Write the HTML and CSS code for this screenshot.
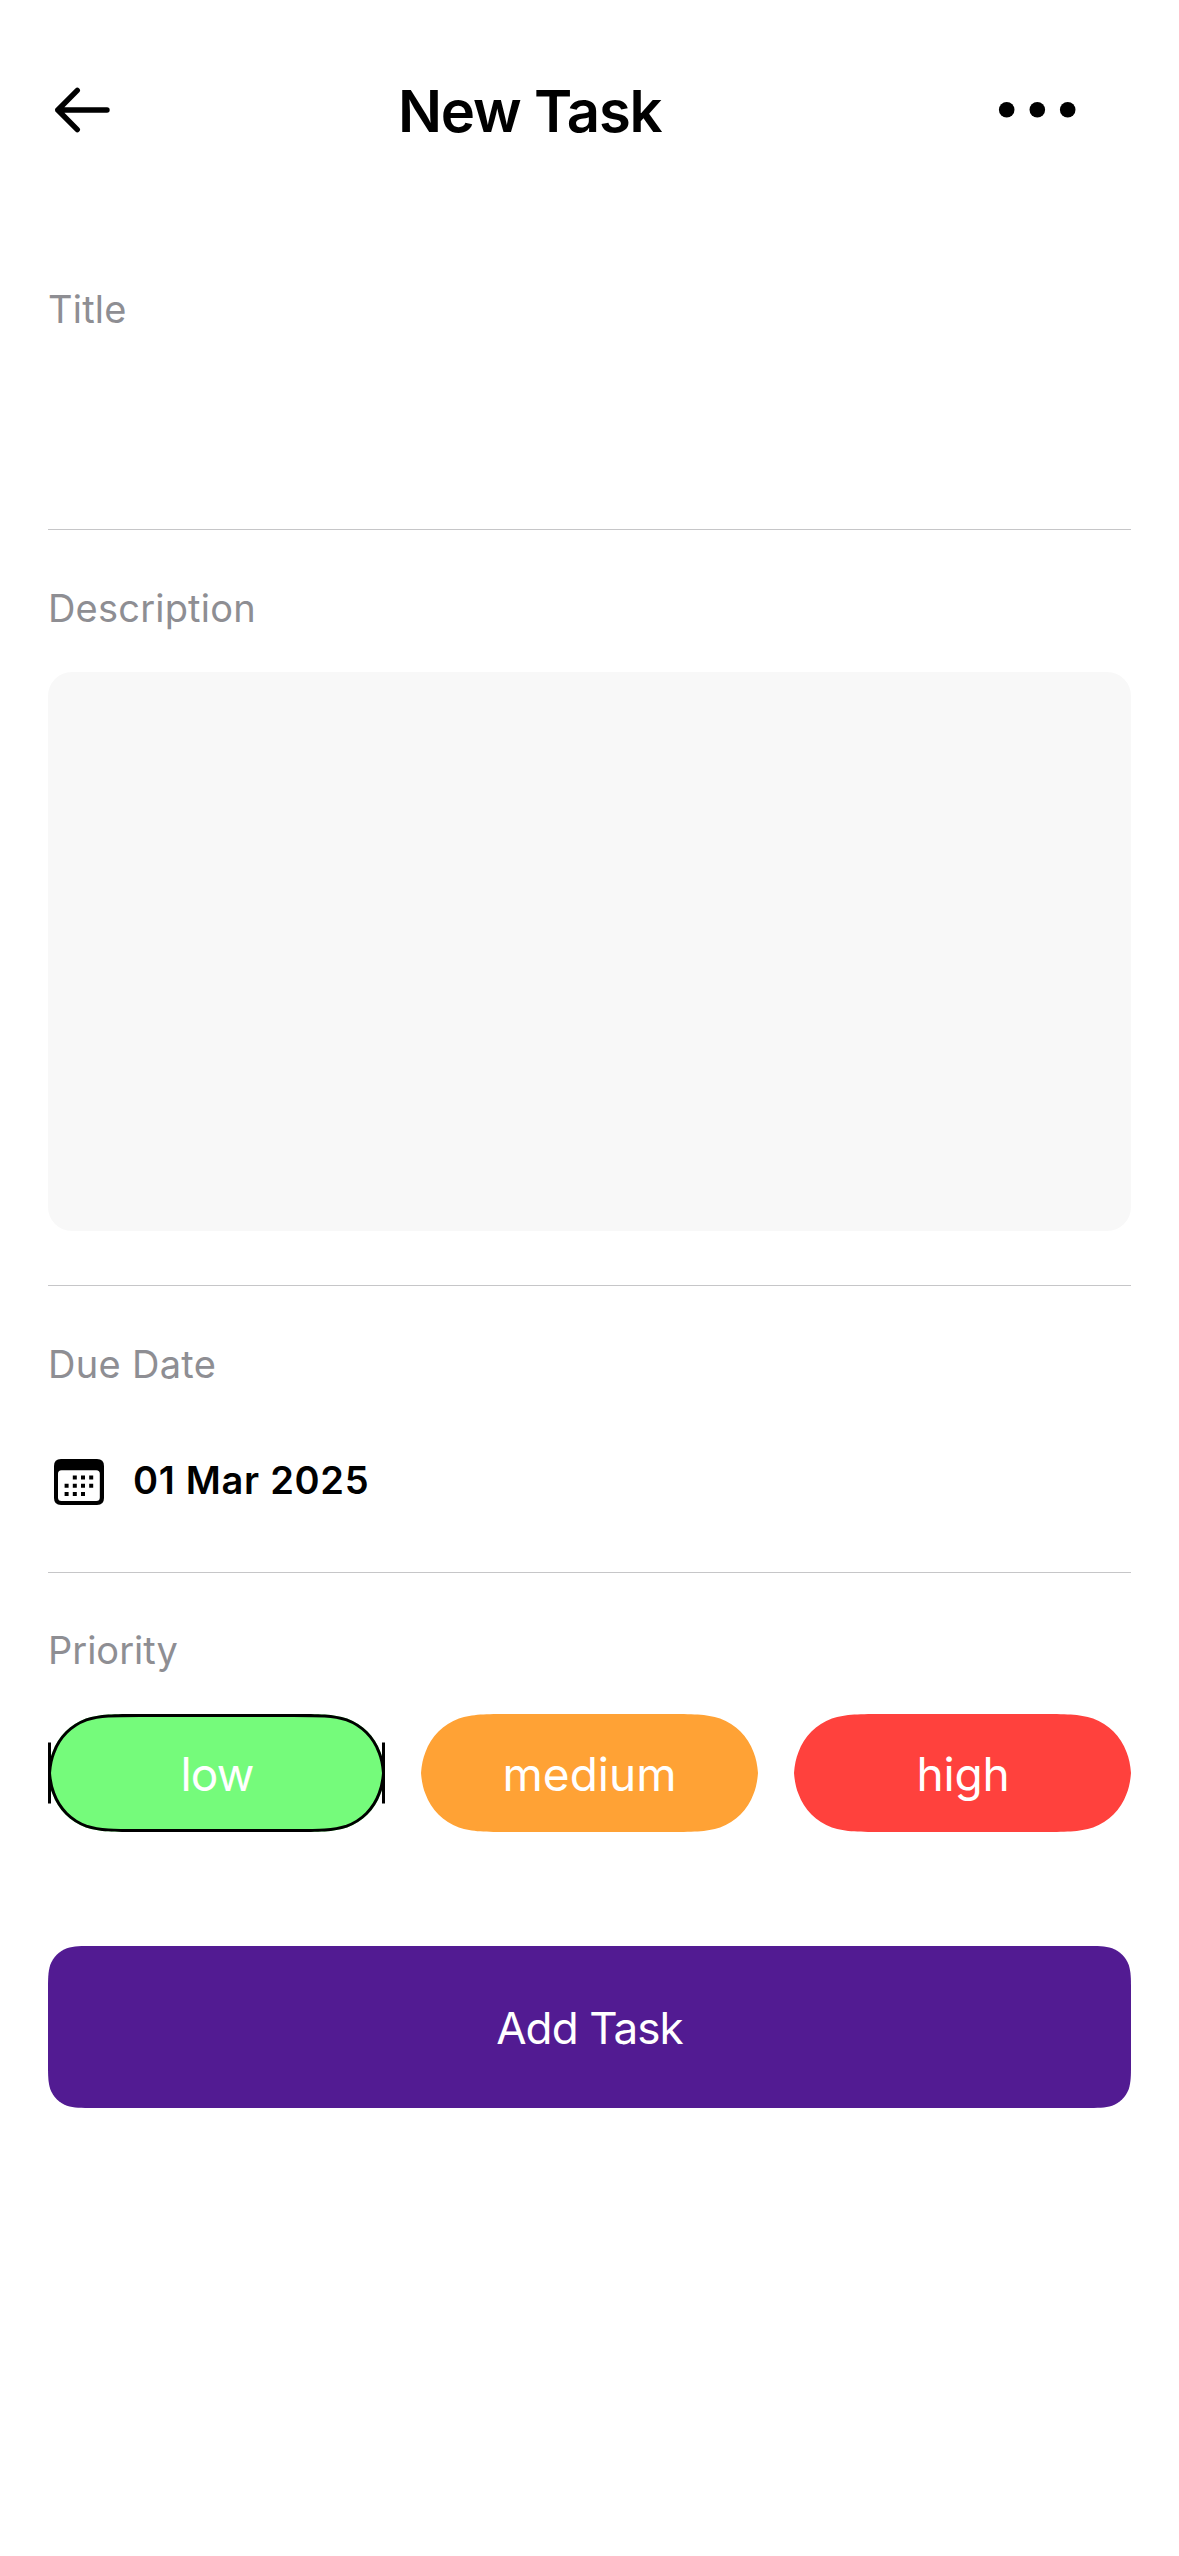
FILE: index.html
```
<!DOCTYPE html>
<html lang="en">
<head>
<meta charset="utf-8">
<title>New Task</title>
<link rel="stylesheet" href="styles.css">
</head>
<body>
<main class="screen">
  <header class="header">
    <svg class="back" width="60" height="72" viewBox="0 0 60 72" fill="none" stroke="#000" stroke-width="5.4" stroke-linecap="round" stroke-linejoin="round"><path d="M23.3 16.3 3.8 36l19.5 19.7M3.8 36H53"/></svg>
    <h1 class="heading">New Task</h1>
    <svg class="more" width="80" height="72" viewBox="0 0 80 72"><circle cx="9.7" cy="35.8" r="7.8"/><circle cx="40.3" cy="35.8" r="7.8"/><circle cx="70.7" cy="35.8" r="7.8"/></svg>
  </header>

  <section class="field field-title">
    <div class="label">Title</div>
  </section>

  <section class="field field-description">
    <div class="label">Description</div>
    <div class="editor"></div>
  </section>

  <section class="field field-date">
    <div class="label">Due Date</div>
    <div class="date-row">
      <svg width="50" height="46" viewBox="0 0 50 46"><path fill-rule="evenodd" d="M7 0H43Q50 0 50 7V39Q50 46 43 46H7Q0 46 0 39V7Q0 0 7 0ZM7.500 11.300Q4 11.300 4 14.800V38.500Q4 42 7.500 42H42.300Q45.800 42 45.800 38.500V14.800Q45.800 11.300 42.300 11.300Z"/><path d="M18.800 16.600h4v4h-4zM27 16.600h4v4h-4zM35.200 16.600h4v4h-4zM10.600 24.800h4v4h-4zM18.800 24.800h4v4h-4zM27 24.800h4v4h-4zM35.200 24.800h4v4h-4zM10.600 33h4v4h-4zM18.800 33h4v4h-4zM27 33h4v4h-4z"/></svg>
      <span class="date">01 Mar 2025</span>
    </div>
  </section>

  <section class="field field-priority">
    <div class="label">Priority</div>
    <div class="pills">
      <div class="pill-frame">
        <div class="pill low">low</div>
        <svg class="outline" width="337" height="118" viewBox="0 0 337 118">
          <defs><clipPath id="pill"><path d="M0 59C.6 51 2 44 4.500 37.900C10.100 22.400 22.400 10.100 37.900 4.500C52.100 0 65.300 0 91.700 0H245.300C271.700 0 284.900 0 299.100 4.500C314.600 10.100 326.900 22.400 332.500 37.900C335 44 336.400 51 337 59C336.400 67 335 74 332.500 80.100C326.900 95.600 314.600 107.900 299.100 113.500C284.900 118 271.700 118 245.300 118H91.700C65.300 118 52.100 118 37.900 113.500C22.400 107.900 10.100 95.600 4.500 80.100C2 74 .6 67 0 59Z"/></clipPath></defs>
          <path clip-path="url(#pill)" fill="none" stroke="#000" stroke-width="6" d="M0 59C.6 51 2 44 4.500 37.900C10.100 22.400 22.400 10.100 37.900 4.500C52.100 0 65.300 0 91.700 0H245.300C271.700 0 284.900 0 299.100 4.500C314.600 10.100 326.900 22.400 332.500 37.900C335 44 336.400 51 337 59C336.400 67 335 74 332.500 80.100C326.900 95.600 314.600 107.900 299.100 113.500C284.900 118 271.700 118 245.300 118H91.700C65.300 118 52.100 118 37.900 113.500C22.400 107.900 10.100 95.600 4.500 80.100C2 74 .6 67 0 59Z"/>
          <path d="M0 28.500h3v61H0zM334 28.500h3v61h-3z"/>
        </svg>
      </div>
      <div class="pill medium">medium</div>
      <div class="pill high">high</div>
    </div>
  </section>

  <div class="add">Add Task</div>
</main>
</body>
</html>
```
FILE: styles.css
```
* { box-sizing: border-box; }
body {
  margin: 0;
  background: #fff;
  color: #000;
  font-family: Inter, "Liberation Sans", sans-serif;
}
svg { display: block; }
.screen {
  width: 1179px;
  height: 2556px;
  padding: 74px 48px 0;
  display: flex;
  flex-direction: column;
}
.header {
  height: 211px;
  padding-left: 6px;
  display: grid;
  grid-template-columns: 344px 1fr 134px;
  align-items: start;
}
.heading {
  margin: 0;
  font-size: 58px;
  line-height: 74px;
  font-weight: 600;
  letter-spacing: -1.2px;
}
.field { border-bottom: 1px solid #c6c6c8; }
.label {
  font-size: 38px;
  line-height: 48px;
  color: #8e8e93;
  letter-spacing: 0.2px;
}
.field-priority .label { letter-spacing: 0; }
.field-date .label { letter-spacing: 0.3px; }
.field-title { height: 245px; }
.field-description { height: 756px; padding-top: 54px; }
.editor {
  height: 559px;
  margin-top: 40px;
  border-radius: 24px;
  background: #f8f8f8;
}
.field-date { height: 287px; padding-top: 54px; }
.date-row {
  display: flex;
  align-items: flex-start;
  gap: 29px;
  margin-top: 68px;
  padding-left: 6px;
}
.date-row svg { margin-top: 3px; }
.date {
  font-size: 38px;
  line-height: 48px;
  font-weight: 600;
  letter-spacing: 0.7px;
}
.field-priority { padding-top: 53px; border: 0; }
.pills {
  display: grid;
  grid-template-columns: repeat(3, 1fr);
  gap: 36px;
  margin-top: 40px;
}
.pill-frame { position: relative; }
.outline { position: absolute; top: 0; left: 0; }
.pill {
  height: 118px;
  text-align: center;
  font-size: 46px;
  line-height: 120px;
  color: #fff;
  clip-path: path("M0 59C.6 51 2 44 4.5 37.9C10.1 22.4 22.4 10.1 37.9 4.5C52.1 0 65.3 0 91.7 0H245.3C271.7 0 284.9 0 299.1 4.5C314.600 10.1 326.9 22.4 332.5 37.9C335 44 336.4 51 337 59C336.4 67 335 74 332.5 80.1C326.9 95.6 314.6 107.9 299.1 113.5C284.9 118 271.7 118 245.3 118H91.7C65.3 118 52.1 118 37.9 113.5C22.4 107.9 10.1 95.6 4.5 80.1C2 74 .6 67 0 59Z");
}
.low { background: #75fb7b; padding-left: 1px; letter-spacing: -0.8px; }
.medium { background: #ffa235; }
.high { background: #ff413d; padding-left: 1px; letter-spacing: -0.2px; }
.add {
  height: 162px;
  margin-top: 114px;
  background: #521b92;
  color: #fff;
  text-align: center;
  font-size: 44px;
  line-height: 164px;
  letter-spacing: -0.9px;
  clip-path: path("M0 45.900C0 32.700 0 26.100 2.200 18.900C5.100 11.200 11.200 5.100 18.900 2.200C26.100 0 32.700 0 45.900 0H1037.100C1050.300 0 1056.900 0 1064.100 2.200C1071.800 5.100 1077.900 11.200 1080.800 18.900C1083 26.100 1083 32.700 1083 45.900V116.100C1083 129.300 1083 135.900 1080.800 143.100C1077.900 150.800 1071.800 156.900 1064.100 159.800C1056.900 162 1050.300 162 1037.100 162H45.900C32.700 162 26.100 162 18.900 159.800C11.200 156.900 5.100 150.800 2.200 143.100C0 135.900 0 129.300 0 116.100Z");
}
```
